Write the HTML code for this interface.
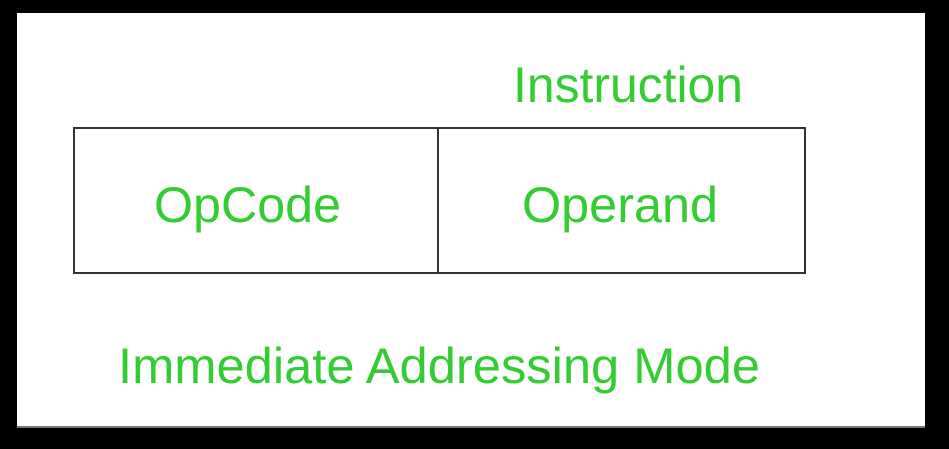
<!DOCTYPE html>
<html><head><style>
html,body{margin:0;padding:0;background:#000;width:949px;height:449px;overflow:hidden}
</style></head><body>
<svg width="949" height="449" xmlns="http://www.w3.org/2000/svg">
<rect x="0" y="0" width="949" height="449" fill="#000"/>
<rect x="17" y="13" width="908" height="415" fill="#fff"/>
<rect x="17" y="426" width="908" height="2" fill="#777"/>
<rect x="74" y="128" width="731" height="145" fill="none" stroke="#333" stroke-width="2"/>
<line x1="438" y1="128" x2="438" y2="273" stroke="#333" stroke-width="2"/>
<g font-family="Liberation Sans, Arial, sans-serif" font-size="50" fill="#33cc33">
<text x="513" y="102" textLength="230" lengthAdjust="spacingAndGlyphs">Instruction</text>
<text x="154" y="222" textLength="187" lengthAdjust="spacingAndGlyphs">OpCode</text>
<text x="522" y="222" textLength="196" lengthAdjust="spacingAndGlyphs">Operand</text>
<text x="118" y="383" textLength="642" lengthAdjust="spacingAndGlyphs">Immediate Addressing Mode</text>
</g>
</svg>
</body></html>
